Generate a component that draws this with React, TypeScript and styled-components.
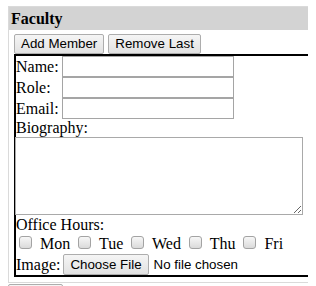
import styled, { createGlobalStyle } from 'styled-components'

const GlobalStyle = createGlobalStyle`
	body {
		margin: 6px 8px 0;
		font-family: 'Liberation Serif', 'Times New Roman', serif;
		font-size: 16px;
		color: #000;
		background: #fff;
	}
`

const days = ['Mon', 'Tue', 'Wed', 'Thu', 'Fri']
const fields = ['Name:', 'Role:', 'Email:']

export default function App() {
	return (
		<>
			<GlobalStyle />
			<Panel>
				<Header>Faculty</Header>
				<Toolbar>
					<Button>Add Member</Button>
					<Button>Remove Last</Button>
				</Toolbar>
				<MemberBox>
					<FieldGrid>
						{fields.map((f) => (
							<Field key={f}>
								<span>{f}</span>
								<TextInput type="text" />
							</Field>
						))}
					</FieldGrid>
					<Label>Biography:</Label>
					<Bio />
					<Label $gap>Office Hours:</Label>
					<CheckRow>
						{days.map((d, i) => (
							<span key={d}>
								<Check type="checkbox" $first={i === 0} /> {d}{' '}
							</span>
						))}
					</CheckRow>
					<ImageRow>
						<span>Image:</span>
						<FileInput type="file" />
					</ImageRow>
				</MemberBox>
			</Panel>
			<Button $bottom>Submit</Button>
		</>
	)
}

const Panel = styled.div`
	width: 301px;
	box-sizing: border-box;
	border: 1px solid #dadada;
	padding: 0 0 5px 5px;
`
const Header = styled.div`
	height: 23px;
	margin-left: -5px;
	padding-left: 2px;
	background: #d3d3d3;
	font-weight: bold;
	line-height: 23px;
`
const Toolbar = styled.div`
	display: flex;
	gap: 4px;
	margin-top: 4px;
`
const Button = styled.button<{ $bottom?: boolean }>`
	height: 20px;
	padding: 0 6px;
	margin: ${(p) => (p.$bottom ? '1px 0 0' : '0')};
	border: 1px solid #adadad;
	border-radius: 2px;
	background: linear-gradient(#f5f5f5, #e2e2e2);
	font-family: 'Liberation Sans', Arial, sans-serif;
	font-size: 13.33px;
	color: #000;
	line-height: 18px;
`
const MemberBox = styled.div`
	width: 296px;
	box-sizing: border-box;
	border: 2px solid #000;
`
const FieldGrid = styled.div`
	display: flex;
	flex-direction: column;
`
const Field = styled.label`
	display: grid;
	grid-template-columns: 46px 172px;
	height: 21px;
	line-height: 21px;
`
const TextInput = styled.input`
	box-sizing: border-box;
	width: 172px;
	height: 21px;
	margin: 0;
	padding: 1px 2px;
	border: 1px solid #a5a5a5;
	font-family: 'Liberation Sans', Arial, sans-serif;
	font-size: 13.33px;
`
const Label = styled.div<{ $gap?: boolean }>`
	height: 18px;
	line-height: 18px;
	margin-top: ${(p) => (p.$gap ? '1px' : '0')};
`
const Bio = styled.textarea`
	display: block;
	box-sizing: border-box;
	width: 288px;
	height: 78px;
	margin: 0 0 0 -1px;
	border: 1px solid #a9a9a9;
	font-family: 'Liberation Mono', monospace;
	font-size: 13px;
`
const CheckRow = styled.div`
	height: 20px;
	line-height: 20px;
	white-space: nowrap;
`
const Check = styled.input<{ $first?: boolean }>`
	appearance: none;
	display: inline-block;
	width: 13px;
	height: 13px;
	margin: 0 4px 0 ${(p) => (p.$first ? '3px' : '4px')};
	box-sizing: border-box;
	border: 1px solid #a3a3a3;
	border-radius: 3px;
	background: linear-gradient(#f7f7f7, #dadada);
	vertical-align: baseline;
`
const ImageRow = styled.div`
	display: flex;
	align-items: center;
	gap: 3px;
	height: 21px;
	line-height: 21px;
`
const FileInput = styled.input`
	font-family: 'Liberation Sans', Arial, sans-serif;
	font-size: 13.33px;
	color: #000;

	&::file-selector-button {
		height: 21px;
		margin: 0 5px 0 0;
		padding: 0 6px;
		border: 1px solid #adadad;
		border-radius: 2px;
		background: linear-gradient(#f5f5f5, #e2e2e2);
		font-family: 'Liberation Sans', Arial, sans-serif;
		font-size: 13.33px;
		color: #000;
	}
`
